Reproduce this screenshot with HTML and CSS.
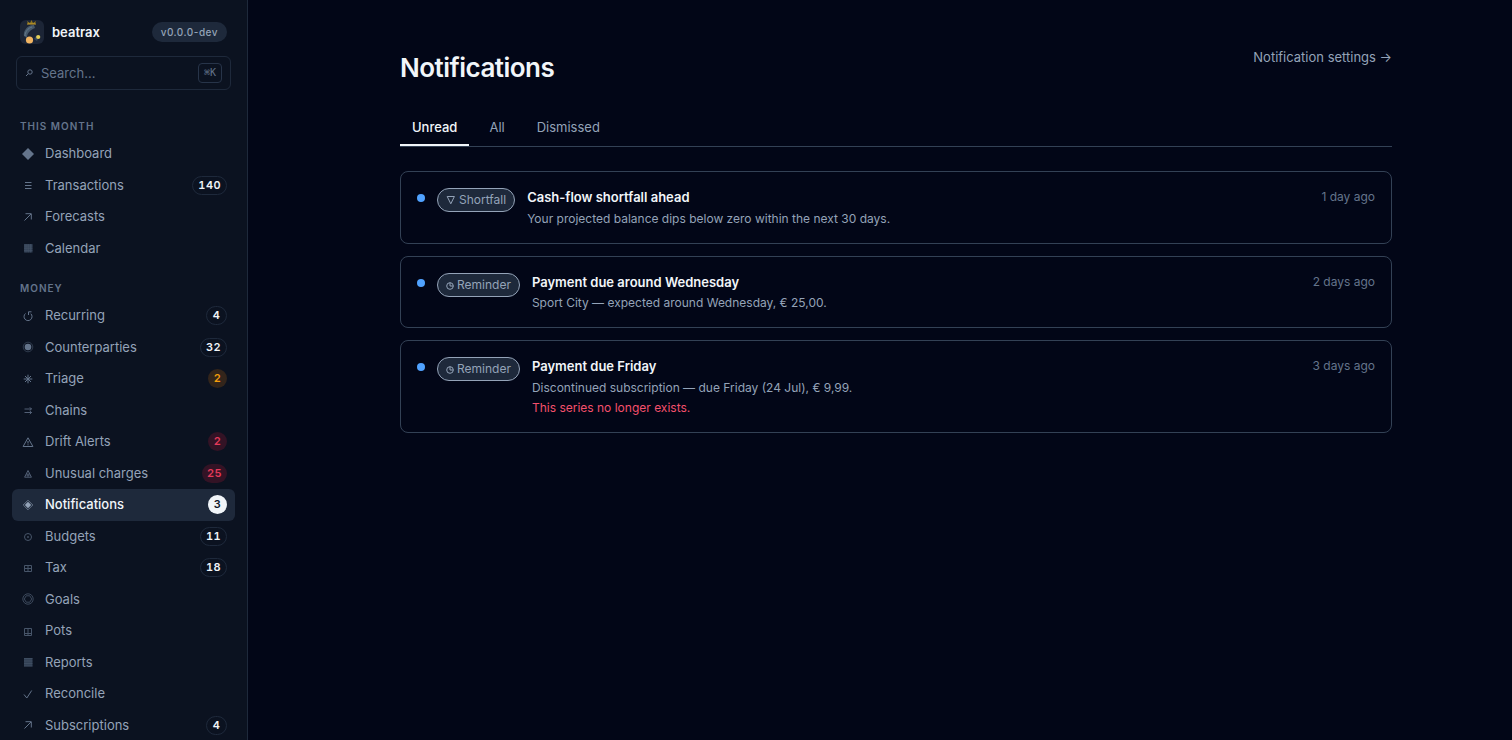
FILE: index.html
```html
<!DOCTYPE html>
<html lang="en">
<head>
    <meta charset="UTF-8">
    <meta name="viewport" content="width=device-width, initial-scale=1.0">
    <title>Notifications · beatrax</title>
    <link rel="stylesheet" href="styles.css">
</head>
<body>
    <aside class="sidebar">
        <div class="brand">
            <svg class="brand-logo" viewBox="0 0 24 24" aria-hidden="true">
                <rect width="24" height="24" rx="6" fill="#1c2536"/>
                <path d="M13 5C6 6 3 12 4 16l3 2c0-5 3-8 8-10l-1-3z" fill="#46586a"/>
                <path d="M12 7c-4 1-7 5-7 9" fill="none" stroke="#65798a" stroke-width="1"/>
                <path d="M14 19l2-3 3 1-2 4z" fill="#35465a"/>
                <path d="M7 1l3 2 1.500-3L13 3l3-2-1 3H8z" fill="#8d7420"/>
                <path d="M7 4h9" stroke="#c7a02c" stroke-width="1"/>
                <circle cx="9.500" cy="20" r="3.600" fill="#f3b562"/>
                <circle cx="18.200" cy="17" r="2.100" fill="#e3cf57"/>
            </svg>
            <span class="brand-name">beatrax</span>
            <span class="version">v0.0.0-dev</span>
        </div>
        <label class="search">
            <svg class="icon" viewBox="0 0 16 16" aria-hidden="true"><circle cx="9" cy="7" r="2.200"/><path d="M7.300 8.700L5 11"/></svg>
            <input type="text" placeholder="Search..." aria-label="Search">
            <kbd>⌘K</kbd>
        </label>

        <nav class="nav">
            <section class="nav-group">
                <h2>This month</h2>
                <a href="#"><svg class="icon" viewBox="0 0 16 16"><path class="solid" d="M8 2L14 8 8 14 2 8z"/></svg><span>Dashboard</span></a>
                <a href="#"><svg class="icon" viewBox="0 0 16 16"><path d="M5 5.500h6.500M5 8.500h6.500M5 11.500h6.500"/></svg><span>Transactions</span><b class="count">140</b></a>
                <a href="#"><svg class="icon" viewBox="0 0 16 16"><path d="M4.500 11.500l6.500-6.500M5.500 4.700h5.800v5.800"/></svg><span>Forecasts</span></a>
                <a href="#"><svg class="icon" viewBox="0 0 16 16"><path class="shade" d="M4 4h8.500v8.500H4z"/><path class="faint" d="M4 6h8.500M4 8.200h8.500M4 10.400h8.500M6 4v8.500M8.200 4v8.500M10.400 4v8.500"/></svg><span>Calendar</span></a>
            </section>
            <section class="nav-group">
                <h2>Money</h2>
                <a href="#"><svg class="icon" viewBox="0 0 16 16"><path d="M5.500 5.500A4 4 0 1 0 10.800 5.700M11.500 3.800H8.500V7"/></svg><span>Recurring</span><b class="count">4</b></a>
                <a href="#"><svg class="icon" viewBox="0 0 16 16"><circle class="solid" cx="8" cy="8" r="3.300"/><circle class="faint" cx="8" cy="8" r="4.800"/></svg><span>Counterparties</span><b class="count">32</b></a>
                <a href="#"><svg class="icon" viewBox="0 0 16 16"><path d="M8 3.700v8.600M3.700 8h8.600M5 5l6 6M11 5l-6 6"/><circle class="dot" cx="8" cy="8" r="1"/></svg><span>Triage</span><b class="count count-amber">2</b></a>
                <a href="#"><svg class="icon thin" viewBox="0 0 16 16"><path d="M4.500 7h7M4.500 10.500h7M9.800 5.300L11.500 7 9.800 8.500M9.800 9l1.700 1.500-1.700 1.700"/></svg><span>Chains</span></a>
                <a href="#"><svg class="icon" viewBox="0 0 16 16"><path d="M8 3.800l4.900 8.700H3.100zM8 7v2.500M8 10.300v1"/></svg><span>Drift Alerts</span><b class="count count-red">2</b></a>
                <a href="#"><svg class="icon thin" viewBox="0 0 16 16"><path d="M8 5.500l3.400 6.700H4.600z"/><circle cx="8" cy="10" r="1.100"/></svg><span>Unusual charges</span><b class="count count-red">25</b></a>
                <a href="#" class="active" aria-current="page"><svg class="icon" viewBox="0 0 16 16"><path class="faint" d="M8 3.200L12.800 8 8 12.800 3.200 8z"/><path class="solid" d="M8 4.800L11.200 8 8 11.200 4.800 8z"/></svg><span>Notifications</span><b class="count count-white">3</b></a>
                <a href="#"><svg class="icon dim" viewBox="0 0 16 16"><circle cx="8" cy="9" r="3.500"/><circle class="dot" cx="8" cy="9" r="0.800"/></svg><span>Budgets</span><b class="count">11</b></a>
                <a href="#"><svg class="icon dim" viewBox="0 0 16 16"><path d="M4.500 5.500h7v6h-7zM8 5.500v6M4.500 8.500h7"/></svg><span>Tax</span><b class="count">18</b></a>
                <a href="#"><svg class="icon dim thin" viewBox="0 0 16 16"><circle cx="8" cy="8" r="5.200"/><path d="M6.200 4.800h3.600l1.900 3.200-1.900 3.200H6.200L4.300 8z"/></svg><span>Goals</span></a>
                <a href="#"><svg class="icon dim" viewBox="0 0 16 16"><path d="M4.500 5.500h7v7h-7zM8 5.500v7M4.500 10.500h7"/></svg><span>Pots</span></a>
                <a href="#"><svg class="icon" viewBox="0 0 16 16"><path class="shade" d="M4 4h8.500v8.500H4z"/><path class="faint" d="M4 4.500h8.500M4 7h8.500M4 9.500h8.500M4 12h8.500"/></svg><span>Reports</span></a>
                <a href="#"><svg class="icon" viewBox="0 0 16 16"><path d="M4 8.500L6.800 12 11.700 4.500"/></svg><span>Reconcile</span></a>
                <a href="#"><svg class="icon" viewBox="0 0 16 16"><path d="M4.500 11.500l6.500-6.500M5.500 4.700h5.800v5.800"/></svg><span>Subscriptions</span><b class="count">4</b></a>
            </section>
        </nav>
    </aside>

    <main class="main">
        <div class="page">
            <header class="page-header">
                <h1>Notifications</h1>
                <a href="#">Notification settings →</a>
            </header>

            <div class="tabs" role="tablist">
                <button type="button" role="tab" class="tab selected" aria-selected="true">Unread</button>
                <button type="button" role="tab" class="tab" aria-selected="false">All</button>
                <button type="button" role="tab" class="tab" aria-selected="false">Dismissed</button>
            </div>

            <div class="cards">
                <article class="card">
                    <span class="unread-dot"></span>
                    <span class="kind"><svg viewBox="0 0 10 12" aria-hidden="true"><path d="M1.200 2.500h7.200L4.800 9.800z"/></svg>Shortfall</span>
                    <div class="card-body">
                        <h3>Cash-flow shortfall ahead</h3>
                        <p>Your projected balance dips below zero within the next 30 days.</p>
                    </div>
                    <time>1 day ago</time>
                </article>
                <article class="card">
                    <span class="unread-dot"></span>
                    <span class="kind"><svg class="clock" viewBox="0 0 8 12" aria-hidden="true"><circle cx="4" cy="7" r="3.300"/><path d="M4 3.700V7h3.300"/></svg>Reminder</span>
                    <div class="card-body">
                        <h3>Payment due around Wednesday</h3>
                        <p>Sport City — expected around Wednesday, € 25,00.</p>
                    </div>
                    <time>2 days ago</time>
                </article>
                <article class="card">
                    <span class="unread-dot"></span>
                    <span class="kind"><svg class="clock" viewBox="0 0 8 12" aria-hidden="true"><circle cx="4" cy="7" r="3.300"/><path d="M4 3.700V7h3.300"/></svg>Reminder</span>
                    <div class="card-body">
                        <h3>Payment due Friday</h3>
                        <p>Discontinued subscription — due Friday (24 Jul), € 9,99.</p>
                        <p class="warning">This series no longer exists.</p>
                    </div>
                    <time>3 days ago</time>
                </article>
            </div>
        </div>
    </main>
</body>
</html>
```
FILE: styles.css
```css
* {
    margin: 0;
    padding: 0;
    box-sizing: border-box;
}

body {
    display: flex;
    height: 100vh;
    overflow: hidden;
    background: #020617;
    color: #94a3b8;
    font-family: Inter, "Liberation Sans", sans-serif;
    font-size: 13px;
    line-height: 1.5;
}

a {
    color: inherit;
    text-decoration: none;
}

/* Sidebar */
.sidebar {
    flex: 0 0 248px;
    overflow: hidden;
    padding: 20px 12px 0;
    background: #0b1220;
    border-right: 1px solid #1e293b;
}

.brand {
    display: flex;
    align-items: center;
    gap: 8px;
    padding: 0 8px;
}

.brand-logo {
    width: 24px;
    height: 24px;
}

.brand-name {
    flex: 1;
    color: #f1f5f9;
    font-weight: 600;
    line-height: 24px;
}

.version {
    padding: 0 9px;
    border-radius: 10px;
    background: #1e293b;
    font-size: 10px;
    font-weight: 500;
    line-height: 20px;
    letter-spacing: 0.05em;
}

.search {
    display: flex;
    align-items: center;
    gap: 4px;
    height: 34px;
    margin: 12px 4px 0;
    padding: 0 8px 0 4px;
    border: 1px solid #1e293b;
    border-radius: 6px;
}

.search input {
    flex: 1;
    min-width: 0;
    border: none;
    outline: none;
    background: none;
    color: #f1f5f9;
    font: inherit;
    line-height: 20px;
}

.search input::placeholder {
    color: #64748b;
    opacity: 1;
}

.search kbd {
    padding: 0 5px;
    border: 1px solid #273449;
    border-radius: 4px;
    color: #64748b;
    font-family: "DejaVu Sans Mono", monospace;
    font-size: 10px;
    line-height: 18px;
}

.nav {
    display: flex;
    flex-direction: column;
    gap: 16px;
    margin-top: 28px;
}

.nav-group h2 {
    padding: 0 8px;
    margin-bottom: 4px;
    color: #64748b;
    font-size: 10px;
    font-weight: 600;
    line-height: 16px;
    letter-spacing: 0.1em;
    text-transform: uppercase;
}

.nav-group a {
    display: flex;
    align-items: center;
    gap: 9px;
    padding: 6px 8px;
    border-radius: 6px;
}

.nav-group a span {
    flex: 1;
}

.nav-group a.active {
    background: #1e293b;
    color: #f1f5f9;
    font-weight: 500;
}

.icon {
    flex: none;
    width: 16px;
    height: 16px;
    fill: none;
    stroke: #64748b;
    stroke-width: 1;
}

.icon.dim {
    stroke: #475569;
}

.icon.thin {
    stroke-width: 0.8;
}

.icon .solid,
.icon .dot {
    fill: #64748b;
    stroke: none;
}

.icon .shade {
    fill: #334155;
    stroke: none;
}

.icon .faint {
    stroke: #475569;
    stroke-width: 0.6;
}

.active .icon .solid {
    fill: #94a3b8;
}

.active .icon .faint {
    stroke: #94a3b8;
}

.count {
    min-width: 21px;
    margin: -1px 0;
    padding: 0 5px;
    border: 1px solid #1e293b;
    border-radius: 10px;
    color: #f1f5f9;
    font-size: 11px;
    font-weight: 600;
    font-variant-numeric: tabular-nums;
    line-height: 17px;
    letter-spacing: 0.04em;
    text-align: center;
}

.count-amber,
.count-red,
.count-white {
    min-width: 19px;
    border: none;
    line-height: 19px;
}

.count-amber {
    background: #33251b;
    color: #f59e0b;
}

.count-red {
    background: #331325;
    color: #e63a5a;
}

.count-white {
    background: #f1f5f9;
    color: #0f172a;
}

/* Page */
.main {
    flex: 1;
    padding: 48px 0 48px 32px;
}

.page {
    max-width: 992px;
    margin: 0 auto;
}

.page-header {
    display: flex;
    justify-content: space-between;
    align-items: flex-start;
}

.page-header h1 {
    color: #f1f5f9;
    font-size: 26px;
    font-weight: 600;
    line-height: 40px;
    letter-spacing: -0.02em;
}

.tabs {
    display: flex;
    gap: 8px;
    margin-top: 22px;
    border-bottom: 1px solid #334155;
}

.tab {
    padding: 7px 12px;
    border: none;
    border-bottom: 2px solid transparent;
    background: none;
    color: #94a3b8;
    font: inherit;
    line-height: 20px;
    cursor: pointer;
}

.tab.selected {
    border-color: #f1f5f9;
    color: #f1f5f9;
    font-weight: 500;
}

.cards {
    display: flex;
    flex-direction: column;
    gap: 12px;
    margin-top: 24px;
}

.card {
    display: flex;
    align-items: flex-start;
    gap: 12px;
    padding: 16px 16px 15px;
    border: 1px solid #334155;
    border-radius: 8px;
}

.unread-dot {
    width: 8px;
    height: 8px;
    margin-top: 6px;
    border-radius: 50%;
    background: #50a2ff;
}

.kind {
    display: flex;
    align-items: center;
    gap: 3px;
    padding: 0 8px;
    border: 1px solid #94a3b8;
    border-radius: 12px;
    background: #1e293b;
    font-size: 12px;
    line-height: 22px;
}

.kind svg {
    width: 10px;
    height: 12px;
    fill: none;
    stroke: currentColor;
}

.kind .clock {
    width: 8px;
}

.card-body {
    flex: 1;
}

.card h3 {
    color: #f1f5f9;
    font-size: 13px;
    font-weight: 600;
}

.card p {
    margin-top: 2px;
    font-size: 12px;
}

.card .warning {
    color: #f4506c;
}

.card time {
    color: #64748b;
    font-size: 12px;
}
```
